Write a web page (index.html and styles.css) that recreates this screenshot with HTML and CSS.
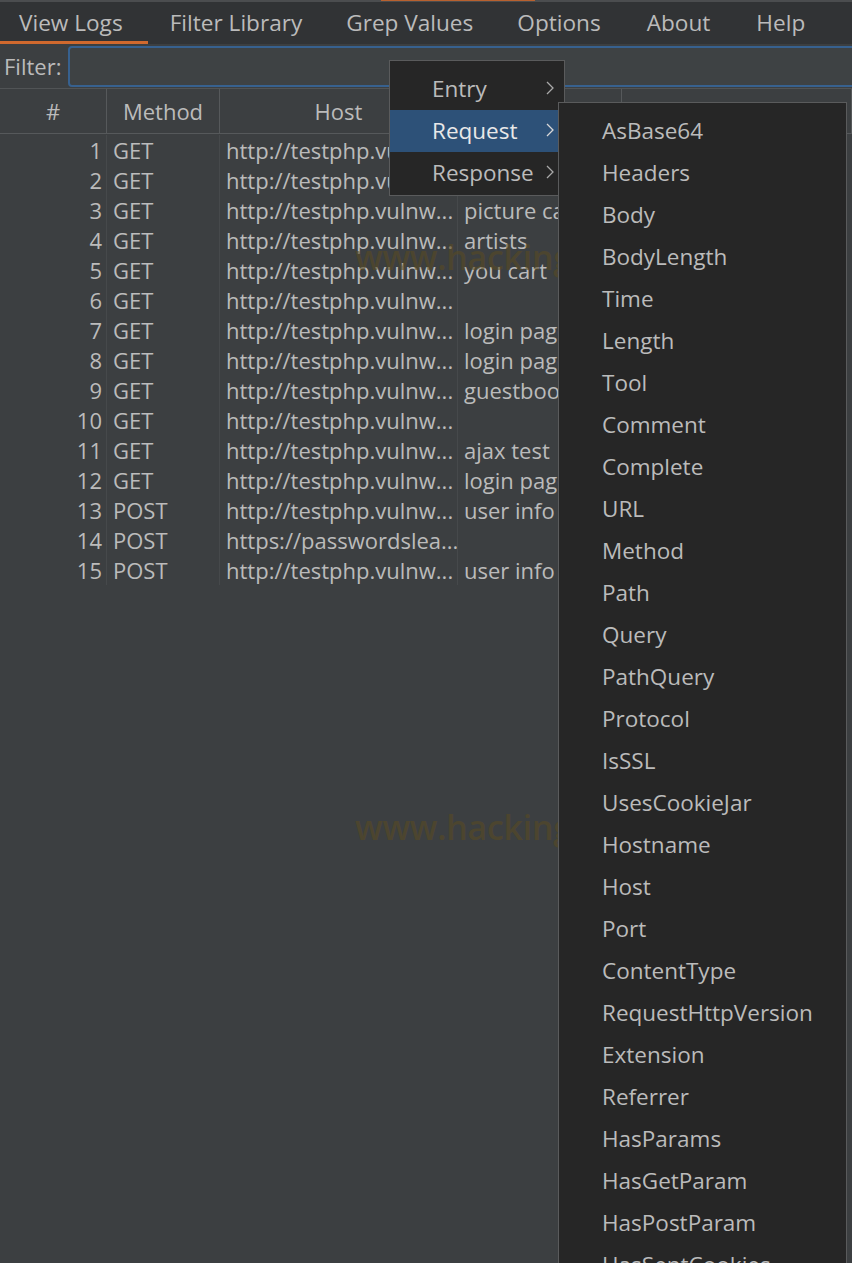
FILE: index.html
```html
<!DOCTYPE html>
<html>
<head>
<meta charset="utf-8">
<link rel="stylesheet" href="styles.css">
</head>
<body>
<div class="app">
  <div class="topline"><span class="seg-grey"></span><span class="seg-orange"></span></div>
  <nav class="tabs">
    <div class="tab active">View Logs</div>
    <div class="tab">Filter Library</div>
    <div class="tab">Grep Values</div>
    <div class="tab">Options</div>
    <div class="tab">About</div>
    <div class="tab">Help</div>
  </nav>
  <div class="filter-row">
    <label class="filter-label">Filter:</label>
    <div class="filter-input"></div>
  </div>
  <div class="table">
    <div class="thead">
      <div class="c c1 center">#</div>
      <div class="c c2 center">Method</div>
      <div class="c c3 center">Host</div>
      <div class="c c4"></div>
      <div class="c c5"></div>
    </div>
    <div class="tbody">
      <div class="row"><div class="c c1 num">1</div><div class="c c2">GET</div><div class="c c3">http://testphp.vulnw...</div><div class="c c4">home</div><div class="c c5"></div></div>
      <div class="row"><div class="c c1 num">2</div><div class="c c2">GET</div><div class="c c3">http://testphp.vulnw...</div><div class="c c4">categories</div><div class="c c5"></div></div>
      <div class="row"><div class="c c1 num">3</div><div class="c c2">GET</div><div class="c c3">http://testphp.vulnw...</div><div class="c c4">picture categories</div><div class="c c5"></div></div>
      <div class="row"><div class="c c1 num">4</div><div class="c c2">GET</div><div class="c c3">http://testphp.vulnw...</div><div class="c c4">artists</div><div class="c c5"></div></div>
      <div class="row"><div class="c c1 num">5</div><div class="c c2">GET</div><div class="c c3">http://testphp.vulnw...</div><div class="c c4">you cart</div><div class="c c5"></div></div>
      <div class="row"><div class="c c1 num">6</div><div class="c c2">GET</div><div class="c c3">http://testphp.vulnw...</div><div class="c c4"></div><div class="c c5"></div></div>
      <div class="row"><div class="c c1 num">7</div><div class="c c2">GET</div><div class="c c3">http://testphp.vulnw...</div><div class="c c4">login page</div><div class="c c5"></div></div>
      <div class="row"><div class="c c1 num">8</div><div class="c c2">GET</div><div class="c c3">http://testphp.vulnw...</div><div class="c c4">login page</div><div class="c c5"></div></div>
      <div class="row"><div class="c c1 num">9</div><div class="c c2">GET</div><div class="c c3">http://testphp.vulnw...</div><div class="c c4">guestbook</div><div class="c c5"></div></div>
      <div class="row"><div class="c c1 num">10</div><div class="c c2">GET</div><div class="c c3">http://testphp.vulnw...</div><div class="c c4"></div><div class="c c5"></div></div>
      <div class="row"><div class="c c1 num">11</div><div class="c c2">GET</div><div class="c c3">http://testphp.vulnw...</div><div class="c c4">ajax test</div><div class="c c5"></div></div>
      <div class="row"><div class="c c1 num">12</div><div class="c c2">GET</div><div class="c c3">http://testphp.vulnw...</div><div class="c c4">login page</div><div class="c c5"></div></div>
      <div class="row"><div class="c c1 num">13</div><div class="c c2">POST</div><div class="c c3">http://testphp.vulnw...</div><div class="c c4">user info</div><div class="c c5"></div></div>
      <div class="row"><div class="c c1 num">14</div><div class="c c2">POST</div><div class="c c3">https://passwordslea...</div><div class="c c4"></div><div class="c c5"></div></div>
      <div class="row"><div class="c c1 num">15</div><div class="c c2">POST</div><div class="c c3">http://testphp.vulnw...</div><div class="c c4">user info</div><div class="c c5"></div></div>
    </div>
  </div>

  <div class="watermark wm-top">www.hackingarticles.in</div>
  <div class="watermark wm-bottom">www.hackingarticles.in</div>

  <div class="menu menu-main">
    <div class="mi">Entry<svg class="chev" viewBox="0 0 8 14"><polyline points="1,1 7,7 1,13"/></svg></div>
    <div class="mi selected">Request<svg class="chev" viewBox="0 0 8 14"><polyline points="1,1 7,7 1,13"/></svg></div>
    <div class="mi">Response<svg class="chev" viewBox="0 0 8 14"><polyline points="1,1 7,7 1,13"/></svg></div>
  </div>

  <div class="menu menu-sub">
    <div class="si">AsBase64</div>
    <div class="si">Headers</div>
    <div class="si">Body</div>
    <div class="si">BodyLength</div>
    <div class="si">Time</div>
    <div class="si">Length</div>
    <div class="si">Tool</div>
    <div class="si">Comment</div>
    <div class="si">Complete</div>
    <div class="si">URL</div>
    <div class="si">Method</div>
    <div class="si">Path</div>
    <div class="si">Query</div>
    <div class="si">PathQuery</div>
    <div class="si">Protocol</div>
    <div class="si">IsSSL</div>
    <div class="si">UsesCookieJar</div>
    <div class="si">Hostname</div>
    <div class="si">Host</div>
    <div class="si">Port</div>
    <div class="si">ContentType</div>
    <div class="si">RequestHttpVersion</div>
    <div class="si">Extension</div>
    <div class="si">Referrer</div>
    <div class="si">HasParams</div>
    <div class="si">HasGetParam</div>
    <div class="si">HasPostParam</div>
    <div class="si">HasSentCookies</div>
  </div>
</div>
</body>
</html>
```

FILE: styles.css
```css
html, body {
  margin: 0;
  padding: 0;
  background: #3c3f41;
}
body {
  width: 852px;
  height: 1263px;
  overflow: hidden;
  font-family: "Open Sans", "Noto Sans", sans-serif;
  font-size: 22px;
  color: #bbbbbb;
}
.app {
  position: relative;
  width: 852px;
  height: 1263px;
  overflow: hidden;
}
.topline {
  display: flex;
  height: 2px;
  background: #4b4d4f;
}
.seg-grey { width: 381px; }
.seg-orange { width: 154px; background: #b8612f; height: 1px; }

.tabs {
  display: flex;
  height: 42px;
  background: #313335;
}
.tab {
  padding: 0 22px;
  font-size: 22.6px;
  line-height: 42px;
  height: 42px;
  box-sizing: border-box;
  white-space: nowrap;
  color: #bbbbbb;
}
.tab:first-child { padding-left: 19px; padding-right: 25px; }
.tab:nth-child(4), .tab:nth-child(5) { padding-right: 24px; }
.tab.active {
  border-bottom: 3px solid #d0692e;
}

.filter-row {
  display: flex;
  align-items: center;
  height: 44px;
  background: #3c3f41;
}
.filter-label {
  padding-left: 4px;
  width: 58px;
  flex: none;
}
.filter-input {
  flex: 1;
  height: 41px;
  margin-left: 6px;
  margin-right: -6px;
  box-sizing: border-box;
  border: 2px solid #37618f;
  border-radius: 4px;
  background: #3e4244;
}

.table {
  border-top: 1px solid #515456;
}
.thead {
  display: flex;
  height: 45px;
  border-bottom: 1px solid #56595b;
  box-sizing: border-box;
}
.thead .c {
  line-height: 44px;
  border-right: 1px solid #56595b;
}
.c {
  flex: none;
  box-sizing: border-box;
  white-space: nowrap;
  overflow: hidden;
}
.c1 { width: 107px; }
.c2 { width: 113px; }
.c3 { width: 238px; }
.c4 { width: 164px; }
.c5 { flex: 1; }
.center { text-align: center; }
.tbody {
  padding-top: 1px;
}
.row {
  display: flex;
  height: 30px;
  line-height: 30px;
}
.row .c {
  padding-left: 6px;
  border-right: 1px solid #46494b;
}
.row .c.num {
  padding-left: 0;
  padding-right: 4px;
  text-align: right;
}
.row .c5 { border-right: none; }

.watermark {
  position: absolute;
  left: 355px;
  font-size: 34px;
  font-weight: 600;
  color: rgba(88, 74, 36, 0.6);
  letter-spacing: -0.3px;
  white-space: nowrap;
}
.wm-top { top: 234px; }
.wm-bottom { top: 804px; }

.menu {
  position: absolute;
  background: #262626;
  border: 1px solid #5a5b5c;
  box-sizing: border-box;
}
.menu-main {
  left: 389px;
  top: 60px;
  width: 176px;
  height: 136px;
  padding-top: 7px;
}
.mi {
  position: relative;
  height: 42px;
  line-height: 41px;
  padding-left: 42px;
  font-size: 22.5px;
  color: #bbbbbb;
}
.mi.selected {
  background: #2d5178;
  color: #e8e8e8;
}
.chev {
  position: absolute;
  left: 156px;
  top: 13px;
  width: 8px;
  height: 14px;
  fill: none;
  stroke: #a9a9a9;
  stroke-width: 1.3;
}
.mi.selected .chev { stroke: #d8d8d8; }
.menu-sub {
  left: 558px;
  top: 102px;
  width: 289px;
  height: 1200px;
  padding-top: 7px;
}
.si {
  height: 42px;
  line-height: 41px;
  padding-left: 43px;
  font-size: 22.5px;
  color: #bbbbbb;
  white-space: nowrap;
}
```
